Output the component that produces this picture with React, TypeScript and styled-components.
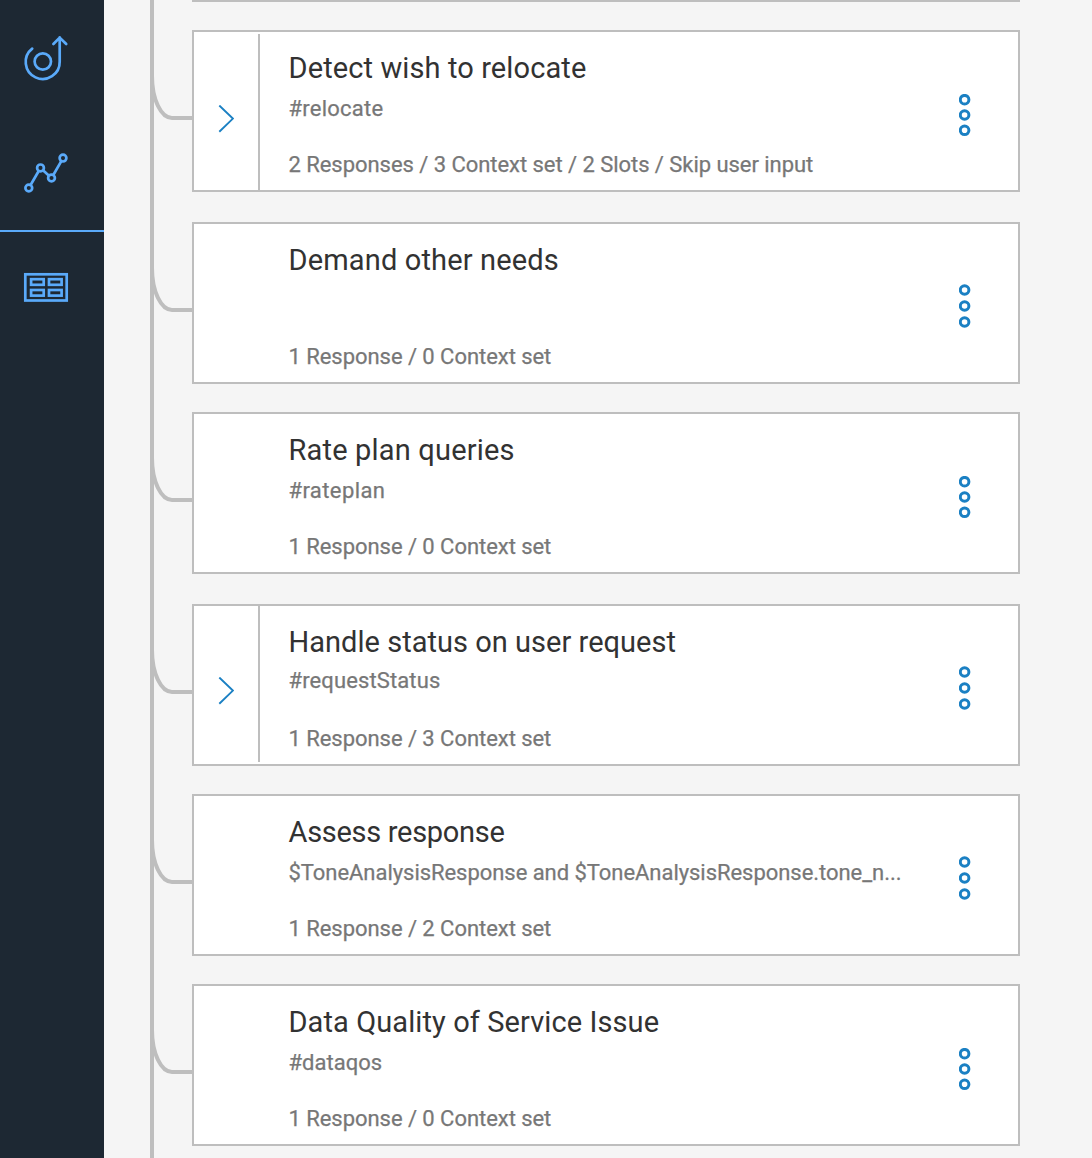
import React from 'react';
import styled, { createGlobalStyle } from 'styled-components';

const colors = {
  nav: '#1d2833',
  navAccent: '#5aaafa',
  page: '#f5f5f5',
  line: '#bebebe',
  action: '#1b80c3',
  title: '#323232',
  muted: '#777777',
};

const GlobalStyle = createGlobalStyle`
  *, *::before, *::after { box-sizing: border-box; }
  body {
    margin: 0;
    background: ${colors.page};
    font-family: Roboto, "Liberation Sans", sans-serif;
  }
`;

const Page = styled.div`
  display: flex;
  height: 1158px;
  overflow: hidden;
`;

const Sidebar = styled.nav`
  flex: none;
  width: 104px;
  background: ${colors.nav};
`;

const NavGroup = styled.div`
  display: flex;
  flex-direction: column;
  gap: 59px;
  height: 232px;
  padding: 30px 0 0 18px;
  border-bottom: 2px solid ${colors.navAccent};
`;

const NavFooterGroup = styled.div`
  padding: 33px 0 0 18px;
`;

const NavIcon = styled.svg`
  display: block;
  fill: none;
  stroke: ${colors.navAccent};
  stroke-width: 2.7;
`;

const Tree = styled.main`
  flex: none;
  display: flex;
  flex-direction: column;
  width: 870px;
  margin-left: 46px;
  border-left: 4px solid ${colors.line};
`;

const PreviousCardEdge = styled.div`
  flex: none;
  height: 2px;
  margin-left: 38px;
  background: ${colors.line};
`;

const NodeRow = styled.div<{ $gap: number }>`
  flex: none;
  display: flex;
  height: 162px;
  margin-top: ${p => p.$gap}px;
`;

const ConnectorLine = styled.svg`
  flex: none;
  display: block;
  fill: none;
  stroke: ${colors.line};
  stroke-width: 4;
`;

const Card = styled.article`
  flex: 1;
  display: flex;
  min-width: 0;
  background: #fff;
  border: 2px solid ${colors.line};
`;

const Expander = styled.div<{ $visible: boolean; $offset: number }>`
  flex: none;
  display: flex;
  justify-content: center;
  width: 66px;
  height: 156px;
  margin-top: ${p => p.$offset}px;
  padding-top: 71px;
  border-right: 2px solid ${p => (p.$visible ? colors.line : 'transparent')};
`;

const Chevron = styled.svg`
  display: block;
  fill: none;
  stroke: ${colors.action};
  stroke-width: 1.9;
`;

const Body = styled.div`
  flex: 1;
  min-width: 0;
  padding: 19px 0 0 28.5px;
  white-space: nowrap;
`;

const Title = styled.h2<{ $tracking: number }>`
  margin: 0;
  color: ${colors.title};
  font-size: 29px;
  font-weight: 400;
  line-height: 34px;
  letter-spacing: ${p => p.$tracking}px;
`;

const Condition = styled.p<{ $tracking: number; $raise: number }>`
  height: 26px;
  margin: ${p => 11 - p.$raise}px 0 ${p => 30 + p.$raise}px;
  color: ${colors.muted};
  font-size: 22px;
  line-height: 26px;
  letter-spacing: ${p => p.$tracking}px;
  -webkit-text-stroke: 0.25px ${colors.muted};
`;

const Summary = styled.p`
  margin: 0;
  color: ${colors.muted};
  font-size: 22px;
  line-height: 26px;
  letter-spacing: -0.045px;
  -webkit-text-stroke: 0.25px ${colors.muted};
`;

const MenuButton = styled.button<{ $offset: number }>`
  flex: none;
  align-self: flex-start;
  width: 12px;
  margin: ${p => p.$offset}px 47px 0 0;
  padding: 0;
  border: 0;
  background: none;
`;

const MenuDots = styled.svg`
  display: block;
  fill: none;
  stroke: ${colors.action};
  stroke-width: 3;
`;

interface DialogNode {
  title: string;
  titleTracking: number;
  condition?: string;
  conditionTracking?: number;
  conditionRaise?: number;
  summary: string;
  gap: number;
  expandable?: boolean;
  expanderOffset?: number;
  dotSpacing: number;
}

const nodes: DialogNode[] = [
  {
    title: 'Detect wish to relocate', titleTracking: 0.11,
    condition: '#relocate', conditionTracking: 0.24,
    summary: '2 Responses / 3 Context set / 2 Slots / Skip user input',
    gap: 28, expandable: true, expanderOffset: 2, dotSpacing: 15.3,
  },
  {
    title: 'Demand other needs', titleTracking: 0.15,
    summary: '1 Response / 0 Context set',
    gap: 30, dotSpacing: 16,
  },
  {
    title: 'Rate plan queries', titleTracking: 0.18,
    condition: '#rateplan', conditionTracking: 0.4,
    summary: '1 Response / 0 Context set',
    gap: 28, dotSpacing: 15.3,
  },
  {
    title: 'Handle status on user request', titleTracking: 0.03,
    condition: '#requestStatus', conditionTracking: 0.12, conditionRaise: 2,
    summary: '1 Response / 3 Context set',
    gap: 30, expandable: true, expanderOffset: 0, dotSpacing: 16,
  },
  {
    title: 'Assess response', titleTracking: -0.29,
    condition: '$ToneAnalysisResponse and $ToneAnalysisResponse.tone_n...', conditionTracking: -0.045,
    summary: '1 Response / 2 Context set',
    gap: 28, dotSpacing: 16,
  },
  {
    title: 'Data Quality of Service Issue', titleTracking: 0.09,
    condition: '#dataqos', conditionTracking: 0.02,
    summary: '1 Response / 0 Context set',
    gap: 28, dotSpacing: 15.3,
  },
];

function Menu({ spacing }: { spacing: number }) {
  const middle = spacing === 16 ? 22 : 21;
  return (
    <MenuButton $offset={spacing === 16 ? 60 : 62} aria-label="Node options">
      <MenuDots width="12" height="44">
        {[-1, 0, 1].map(i => (
          <circle key={i} cx="5.6" cy={middle + i * spacing} r="4.3" />
        ))}
      </MenuDots>
    </MenuButton>
  );
}

function TreeNode({ node }: { node: DialogNode }) {
  return (
    <NodeRow $gap={node.gap}>
      <ConnectorLine width="38" height="162" viewBox="4 0 38 162">
        <path d="M2 46A20 42 0 0 0 22 88H42" />
      </ConnectorLine>
      <Card>
        <Expander $visible={!!node.expandable} $offset={node.expanderOffset ?? 0}>
          {node.expandable && (
            <Chevron width="16" height="28">
              <path d="M1.3 0.5L14.9 13.6L1.3 26.7" />
            </Chevron>
          )}
        </Expander>
        <Body>
          <Title $tracking={node.titleTracking}>{node.title}</Title>
          <Condition $tracking={node.conditionTracking ?? 0} $raise={node.conditionRaise ?? 0}>
            {node.condition}
          </Condition>
          <Summary>{node.summary}</Summary>
        </Body>
        <Menu spacing={node.dotSpacing} />
      </Card>
    </NodeRow>
  );
}

export default function App() {
  return (
    <Page>
      <GlobalStyle />
      <Sidebar>
        <NavGroup>
          <NavIcon width="56" height="56" strokeLinecap="round" strokeLinejoin="round">
            <circle cx="24.8" cy="31.5" r="8.2" />
            <path d="M14.2 18.6A17 17 0 1 0 41.7 31.5V7.4M35.4 14L41.7 7.6L48.2 14" />
          </NavIcon>
          <NavIcon width="56" height="56">
            <circle cx="10.8" cy="43" r="3.4" />
            <circle cx="22.5" cy="22.9" r="3.4" />
            <circle cx="33.5" cy="33" r="3.4" />
            <circle cx="45" cy="13.1" r="3.4" />
            <path d="M12.6 40L20.7 26M25 25.3L31 30.7M35.3 30L43.3 16.1" />
          </NavIcon>
        </NavGroup>
        <NavFooterGroup>
          <NavIcon width="56" height="44">
            <rect x="7.3" y="9.3" width="41.4" height="26.2" />
            <rect x="13.1" y="14.2" width="12.6" height="5.6" />
            <rect x="31" y="14.2" width="12.6" height="5.6" />
            <rect x="13.1" y="25" width="12.6" height="5.6" />
            <rect x="31" y="25" width="12.6" height="5.6" />
          </NavIcon>
        </NavFooterGroup>
      </Sidebar>
      <Tree>
        <PreviousCardEdge />
        {nodes.map(node => (
          <TreeNode key={node.title} node={node} />
        ))}
      </Tree>
    </Page>
  );
}
